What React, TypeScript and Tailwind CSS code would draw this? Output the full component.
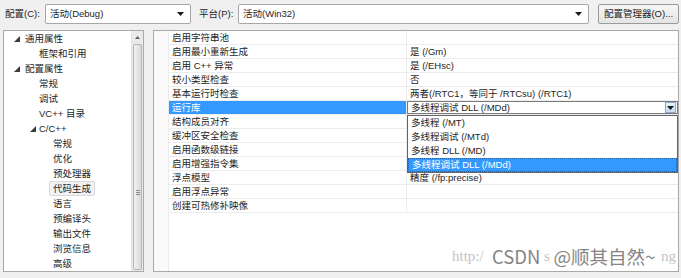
import React from "react";

const rows: { name: string; value: string }[] = [
  { name: "启用字符串池", value: "" },
  { name: "启用最小重新生成", value: "是 (/Gm)" },
  { name: "启用 C++ 异常", value: "是 (/EHsc)" },
  { name: "较小类型检查", value: "否" },
  { name: "基本运行时检查", value: "两者(/RTC1，等同于 /RTCsu) (/RTC1)" },
  { name: "运行库", value: "多线程调试 DLL (/MDd)" },
  { name: "结构成员对齐", value: "" },
  { name: "缓冲区安全检查", value: "" },
  { name: "启用函数级链接", value: "" },
  { name: "启用增强指令集", value: "" },
  { name: "浮点模型", value: "精度 (/fp:precise)" },
  { name: "启用浮点异常", value: "" },
  { name: "创建可热修补映像", value: "" },
];

const options = ["多线程 (/MT)", "多线程调试 (/MTd)", "多线程 DLL (/MD)", "多线程调试 DLL (/MDd)"];

// 树形节点: level 缩进, open 显示展开三角
const tree: { label: string; level: number; open?: boolean; selected?: boolean }[] = [
  { label: "通用属性", level: 0, open: true },
  { label: "框架和引用", level: 1 },
  { label: "配置属性", level: 0, open: true },
  { label: "常规", level: 1 },
  { label: "调试", level: 1 },
  { label: "VC++ 目录", level: 1 },
  { label: "C/C++", level: 1, open: true },
  { label: "常规", level: 2 },
  { label: "优化", level: 2 },
  { label: "预处理器", level: 2 },
  { label: "代码生成", level: 2, selected: true },
  { label: "语言", level: 2 },
  { label: "预编译头", level: 2 },
  { label: "输出文件", level: 2 },
  { label: "浏览信息", level: 2 },
  { label: "高级", level: 2 },
];

const Arrow = () => (
  <svg width="7" height="4" viewBox="0 0 7 4">
    <path d="M0 0h7L3.5 4z" fill="#1a1a1a" />
  </svg>
);

const Expander = () => (
  <svg width="6" height="6" viewBox="0 0 6 6">
    <path d="M6 0v6H0z" fill="#3c3c3c" />
  </svg>
);

const Combo = ({ text, w }: { text: string; w: string }) => (
  <div className={`${w} h-[20px] flex items-center justify-between bg-white border border-[#a7a7a7] rounded-[2px] pl-[4px] pr-[6px]`}>
    <span>{text}</span>
    <Arrow />
  </div>
);

const App = () => {
  return (
    <div className="relative w-[681px] h-[278px] overflow-hidden bg-[#f0f0f0] text-[9.5px] leading-none text-[#1e1e1e] font-['Liberation_Sans','Noto_Sans_CJK_SC',sans-serif]">
      {/* 顶部: 配置 / 平台 */}
      <div className="flex items-center h-[28px] pl-[5px]">
        <span className="w-[40px]">配置(C):</span>
        <Combo text="活动(Debug)" w="w-[146px]" />
        <span className="ml-[8px] w-[39px]">平台(P):</span>
        <Combo text="活动(Win32)" w="w-[351px]" />
        <div className="ml-[9px] w-[81px] h-[20px] flex items-center justify-center border border-[#9a9a9a] rounded-[2px] bg-gradient-to-b from-[#f6f6f6] to-[#e4e4e4]">
          配置管理器(O)...
        </div>
      </div>

      <div className="flex mt-[2px] h-[242px]">
        {/* 左侧树 */}
        <div className="ml-[3px] w-[141px] flex border border-[#a9a9a9] bg-white">
          <div className="flex-1 flex flex-col">
            {tree.map((t, i) => {
              const pad = t.level === 0 ? "pl-[21px]" : t.level === 1 ? "pl-[35px]" : "pl-[49px]";
              return (
                <div key={i} className={`relative h-[15px] flex items-center ${pad}`}>
                  {t.open && (
                    <span className={`absolute top-[5px] ${t.level === 0 ? "left-[10px]" : "left-[26px]"}`}>
                      <Expander />
                    </span>
                  )}
                  <span className={t.selected ? "px-[3px] h-[15px] flex items-center bg-[#f2f2f2] border border-[#d9d9d9] rounded-[2px] -ml-[4px]" : ""}>
                    {t.label}
                  </span>
                </div>
              );
            })}
          </div>
          {/* 滚动条 */}
          <div className="w-[12px] flex flex-col bg-[#eaeaea] border-l border-[#e2e2e2]">
            <div className="h-[13px] flex items-center justify-center">
              <svg width="5" height="3" viewBox="0 0 5 3">
                <path d="M0 3L2.5 0 5 3z" fill="#606060" />
              </svg>
            </div>
            <div className="flex-1 mx-[1px] mb-[1px] flex items-center justify-center rounded-[2px] border border-[#b5b5b5] bg-gradient-to-r from-[#f1f1f1] via-[#e6e6e6] to-[#d9d9d9]">
              <div className="mt-[70px] flex flex-col gap-[1px]">
                <div className="w-[4px] h-px bg-[#8a8a8a]" />
                <div className="w-[4px] h-px bg-[#8a8a8a]" />
                <div className="w-[4px] h-px bg-[#8a8a8a]" />
              </div>
            </div>
          </div>
        </div>

        {/* 右侧属性表 */}
        <div className="ml-[9px] w-[526px] border border-[#a9a9a9] bg-white flex">
          <div className="w-[15px] border-r border-[#ececec] bg-[#fafafa]" />
          <div className="flex-1 flex flex-col">
            {rows.map((r, i) => {
              const active = i === 5;
              return (
                <div key={i} className="relative flex h-[14px] border-b border-[#ececec]">
                  <div className={`w-[238px] flex items-center pl-[3px] border-r border-[#ececec] ${active ? "bg-[#3399ff] text-white" : ""}`}>
                    {r.name}
                  </div>
                  {active ? (
                    <div className="flex-1 flex items-center justify-between pl-[3px] border border-[#7a7a7a] bg-white">
                      <span>{r.value}</span>
                      <div className="w-[11px] h-[11px] mr-[1px] flex items-center justify-center border border-[#8fa9c8] bg-gradient-to-b from-[#eaf3fc] to-[#c5dcf3]">
                        <Arrow />
                      </div>
                    </div>
                  ) : (
                    <div className="flex-1 flex items-center pl-[3px]">{r.value}</div>
                  )}
                  {active && (
                    <div className="absolute z-10 left-[238px] top-[14px] w-[271px] border border-[#646464] bg-white flex flex-col">
                      {options.map((o, j) => (
                        <div
                          key={j}
                          className={`h-[14px] flex items-center pl-[3px] ${j === 3 ? "bg-[#3399ff] text-white border border-dotted border-[#1d5fa8]" : ""}`}
                        >
                          {o}
                        </div>
                      ))}
                    </div>
                  )}
                </div>
              );
            })}
          </div>
        </div>
      </div>

      {/* 水印 */}
      <span className="absolute left-[452px] top-[249px] text-[15px] text-[#c4c4c4] font-['Liberation_Serif',serif]">http:/</span>
      <span className="absolute left-[544px] top-[249px] text-[15px] text-[#c4c4c4] font-['Liberation_Serif',serif]">s</span>
      <span className="absolute left-[661px] top-[249px] text-[15px] text-[#c4c4c4] font-['Liberation_Serif',serif]">ng</span>
      <div className="absolute left-[492px] top-[247px] text-[18.5px] text-[#858585] font-['Noto_Sans_CJK_SC',sans-serif] whitespace-nowrap [text-shadow:0_0_2px_#ffffff]">
        CSDN<span className="ml-[13px]">@顺其自然~</span>
      </div>
    </div>
  );
};

export default App;
